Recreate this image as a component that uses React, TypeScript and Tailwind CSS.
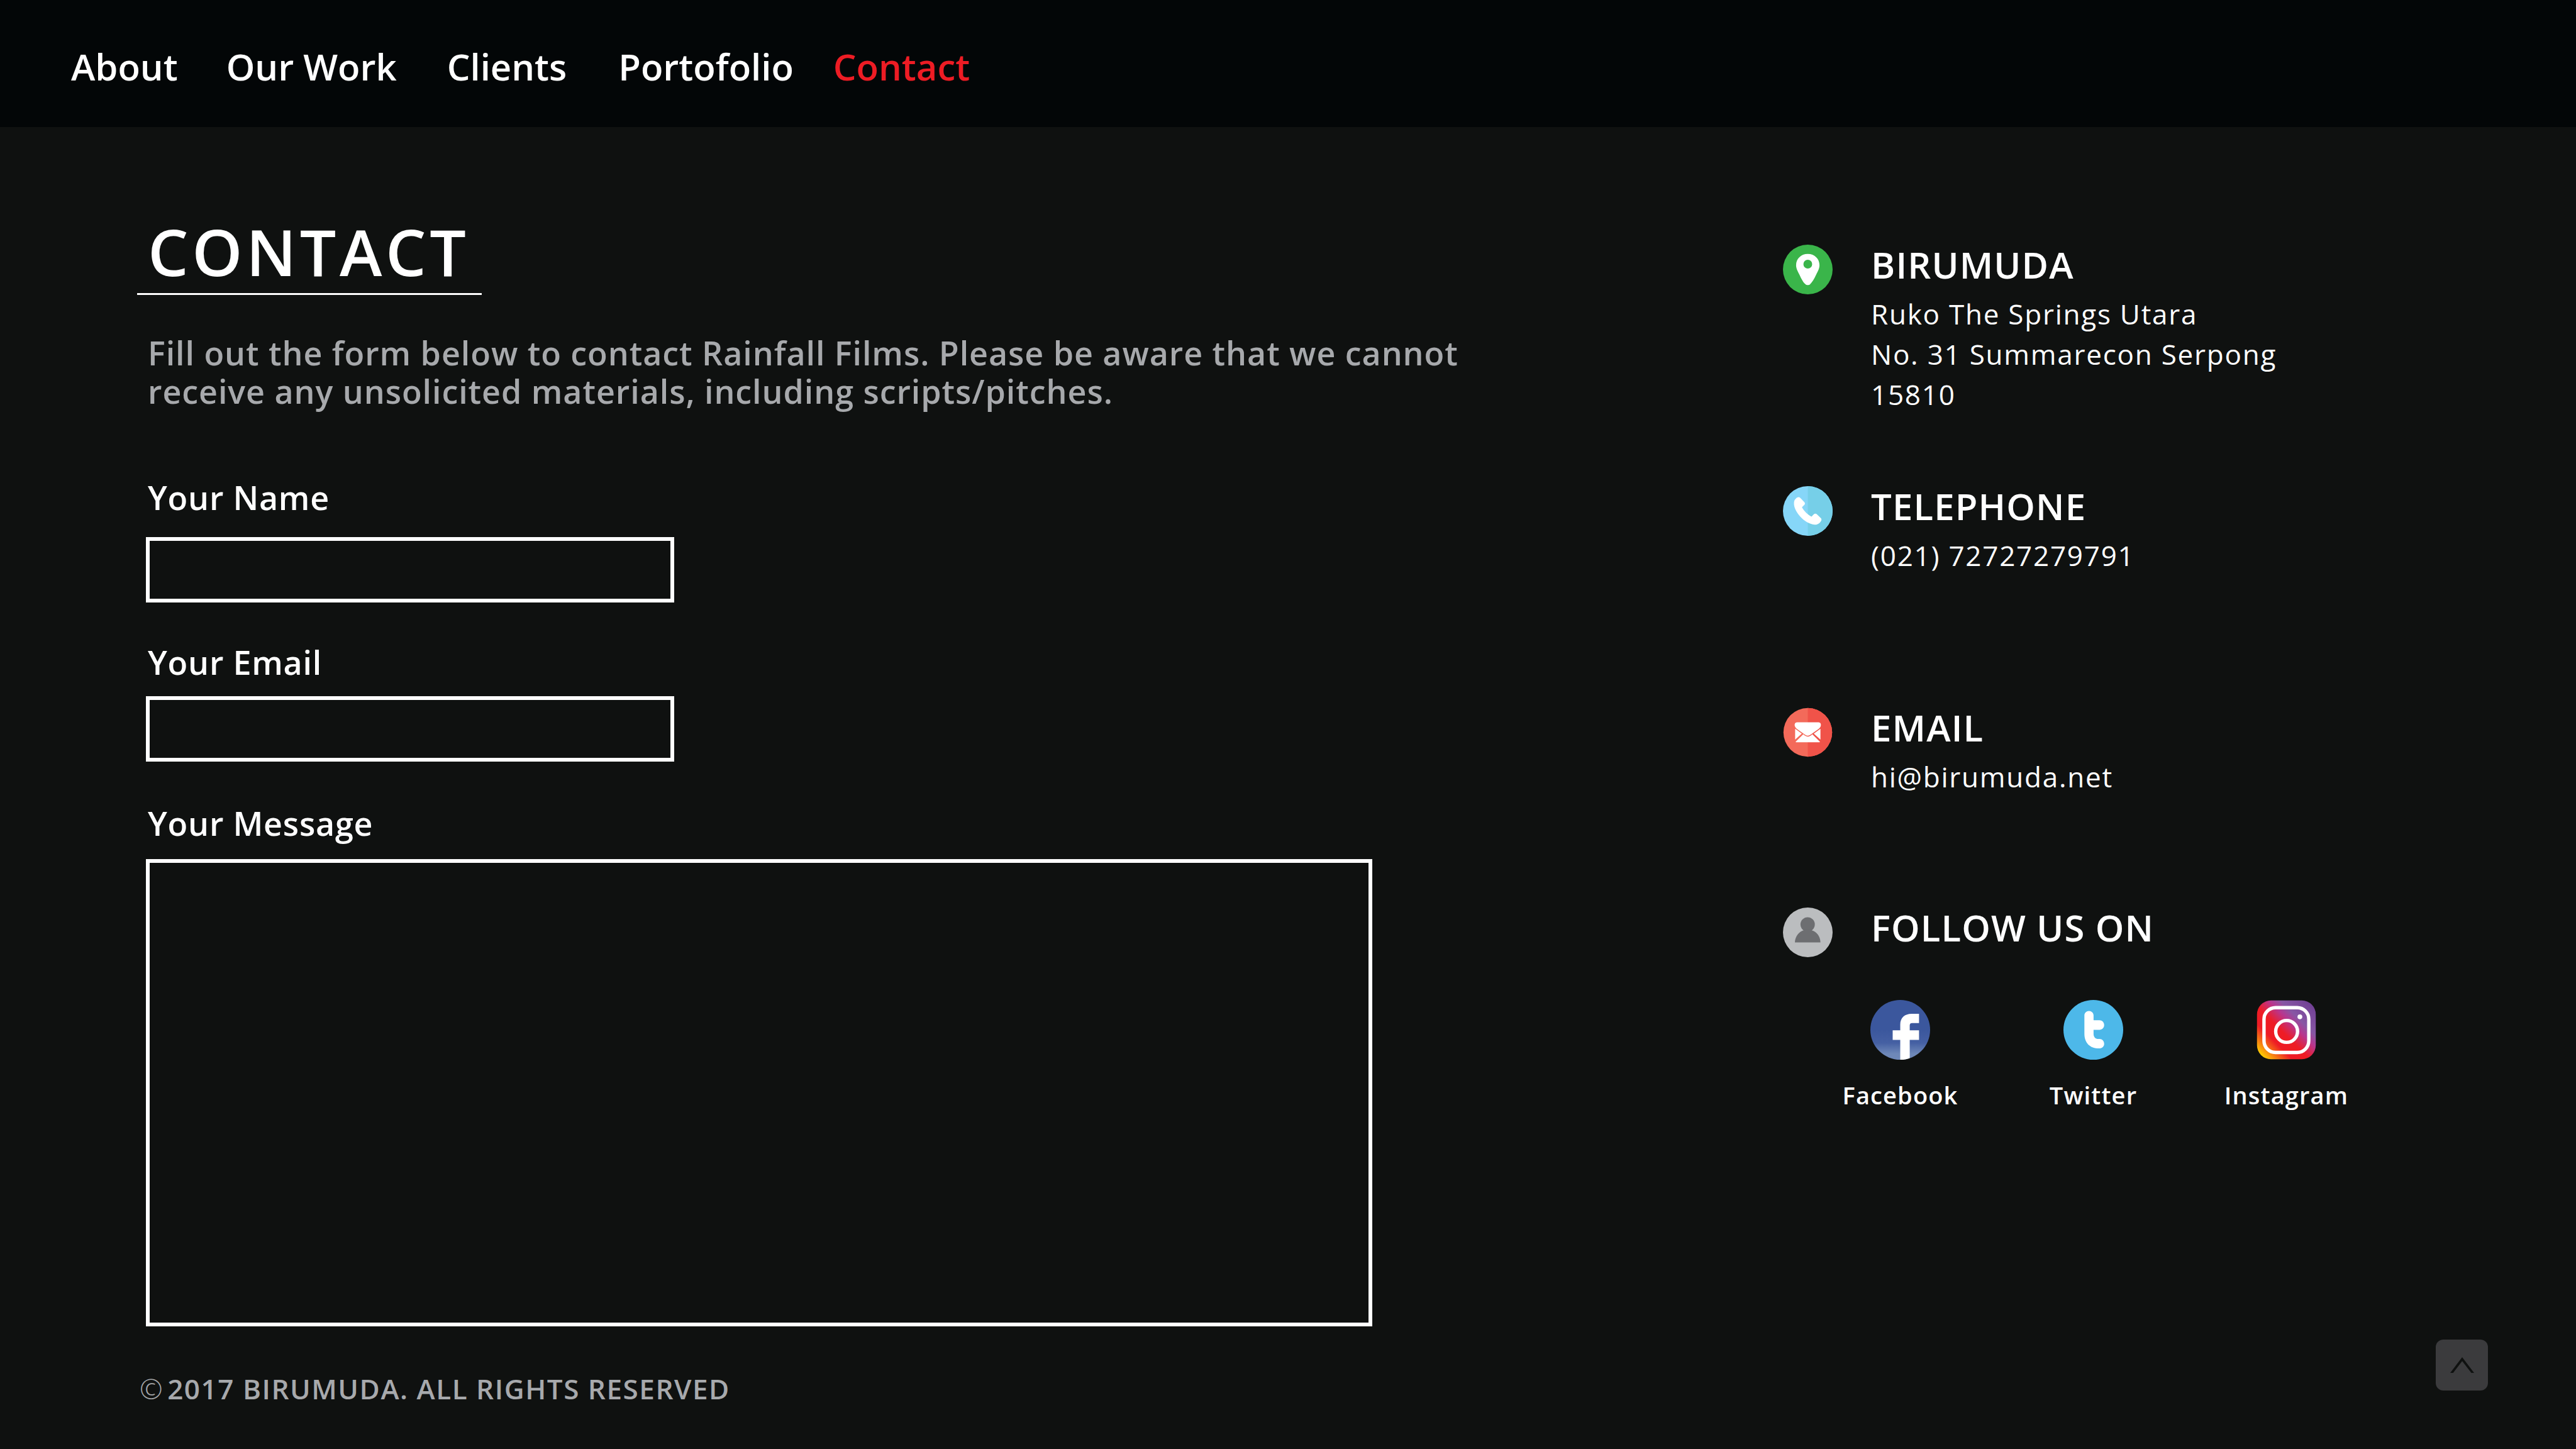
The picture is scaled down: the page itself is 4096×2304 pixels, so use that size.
import React from "react";

const links = [
  { label: "About", cls: "" },
  { label: "Our Work", cls: "ml-[77px]" },
  { label: "Clients", cls: "ml-[80px]" },
  { label: "Portofolio", cls: "ml-[82px]" },
  { label: "Contact", cls: "ml-[63px] text-[#ed1c24]" },
];

function PinIcon() {
  return (
    <svg viewBox="0 0 102 102" className="size-[79px] shrink-0" aria-hidden="true">
      <circle cx="51" cy="51" r="51" fill="#3ab54a" />
      <path
        fillRule="evenodd"
        fill="#fff"
        d="M51 19C37 19 27 29 27 42c0 7 3 12 7 20 4 9 8 16 12 19 2 2 3 2 5 2s3 0 5-2c4-4 8-10 12-19 4-8 7-13 7-20 0-13-10-23-24-23Zm0 12a9 9 0 1 0 0 18a9 9 0 1 0 0-18Z"
      />
    </svg>
  );
}

function PhoneIcon() {
  return (
    <svg viewBox="0 0 102 102" className="size-[79px] shrink-0" aria-hidden="true">
      <circle cx="51" cy="51" r="51" fill="#86d6f8" />
      <path d="M51 0a51 51 0 0 1 0 102Z" fill="#76cfe8" />
      <path
        fill="#fff"
        d="M26 26c3-3.500 7-4.500 10-1.500l8 8.500c1.500 1.500 1.500 4 0 5.500L39 43.300C43 51 51 59 58.700 62.700L63 58c2-2 5-2 7 0l8 8c1.500 1.500 1.500 4 0 6C74 78 70 79.300 65 79C54 78 43 71 35 62C27 53 22 43 22.700 34c0-3 1-6 3.300-8Z"
      />
    </svg>
  );
}

function MailIcon() {
  return (
    <svg viewBox="0 0 102 102" className="size-[79px] shrink-0" aria-hidden="true">
      <circle cx="51" cy="51" r="50" fill="#f36a5a" />
      <path d="M51 1a50 50 0 0 1 0 100Z" fill="#f05349" />
      <path
        fill="#fff"
        d="M29 30.300H73c5 0 5.500 5 4.500 8-1 3-3 4.500-5.500 6.500L57 55.500c-4 3-8 3-12 0L30 44.800c-2.500-2-4.500-3.500-5.500-6.500s-.5-8 4.500-8ZM25 43.700l13.700 10L25 66ZM77 43.700V66L63.300 53.700ZM41.700 55c7 6.500 11.600 6.500 18.600 0L76 70.300c0 .7-.5 1-1.200 1H27.200c-.7 0-1.200-.3-1.200-1Z"
      />
    </svg>
  );
}

function UserIcon() {
  return (
    <svg viewBox="0 0 102 102" className="size-[79px] shrink-0" aria-hidden="true">
      <circle cx="51" cy="51" r="51" fill="#bbbdbf" />
      <circle cx="50.700" cy="34.700" r="14.700" fill="#6d6e71" />
      <path fill="#6d6e71" d="M24.500 71.700C25 59 33 49.500 42.500 46.700L41 45h19.500L59 46.700C69 49.500 77 59 77 71.700Z" />
    </svg>
  );
}

function FacebookIcon() {
  return (
    <svg viewBox="0 0 124 124" className="size-[95px]" aria-hidden="true">
      <defs>
        <linearGradient id="fb" x1="0" y1="0" x2="0" y2="1">
          <stop offset="0.5" stopColor="#3b579d" />
          <stop offset="0.72" stopColor="#4560a3" />
          <stop offset="0.9" stopColor="#6e88b8" />
        </linearGradient>
        <clipPath id="fbc">
          <circle cx="62" cy="62" r="62" />
        </clipPath>
      </defs>
      <circle cx="62" cy="62" r="62" fill="url(#fb)" />
      <path
        clipPath="url(#fbc)"
        fill="#fff"
        d="M62 124V83H46.300V63H62V51c0-14 9-22.300 24-22.300h15V48H86.500c-3.500 0-4.800 2-4.800 5.300V63H101v20H81.700v41Z"
      />
    </svg>
  );
}

function TwitterIcon() {
  return (
    <svg viewBox="0 0 124 124" className="size-[95px]" aria-hidden="true">
      <circle cx="62" cy="62" r="62" fill="#4db8e9" />
      <path
        fill="#fff"
        d="M53 23c5 0 9.500 4 9.500 9v10H75c5 0 9.500 4 9.500 10s-4.500 10-9.500 10H62.500v8c0 7 4 11 10 11H75c5 0 9.500 4 9.500 10S80 100.500 74 100.500c-19 0-30.500-11.500-30.500-30.500V32c0-5 4.500-9 9.500-9Z"
      />
    </svg>
  );
}

function InstagramIcon() {
  return (
    <svg viewBox="0 0 124 124" className="size-[95px]" aria-hidden="true">
      <defs>
        <linearGradient id="ig" x1="0" y1="1" x2="1" y2="0">
          <stop offset="0.05" stopColor="#ffde00" />
          <stop offset="0.3" stopColor="#ee1c25" />
          <stop offset="0.45" stopColor="#ee1c25" />
          <stop offset="0.6" stopColor="#b8368f" />
          <stop offset="0.7" stopColor="#8757a4" />
          <stop offset="1" stopColor="#6b3a90" />
        </linearGradient>
      </defs>
      <rect x="1" y="1" width="122" height="122" rx="29" fill="url(#ig)" />
      <rect x="15.500" y="16" width="93" height="93" rx="24" fill="none" stroke="#fff" strokeWidth="7" />
      <circle cx="62.500" cy="65.300" r="22.700" fill="none" stroke="#fff" strokeWidth="7" />
      <circle cx="90" cy="35" r="5" fill="#fff" />
    </svg>
  );
}

const socials = [
  { label: "Facebook", Icon: FacebookIcon },
  { label: "Twitter", Icon: TwitterIcon },
  { label: "Instagram", Icon: InstagramIcon },
];

const heading = "text-[58px] leading-[64px] font-semibold tracking-[0.02em]";
const detail = "mt-[14px] text-[44px] leading-[64px] font-normal tracking-[0.04em]";
const label = "pl-[3px] text-[52px] leading-[60px] font-semibold tracking-[0.015em]";
const field = "border-[6px] border-white bg-transparent px-6 text-[44px] outline-none";

export default function App() {
  return (
    <div className="flex min-h-screen flex-col bg-[#0f1110] font-['Open_Sans',sans-serif] text-white">
      <header className="flex h-[202px] items-center bg-[#030607] pt-[10px] pl-[113px]">
        <nav className="flex text-[58px] leading-[64px] font-semibold">
          {links.map((l) => (
            <a key={l.label} href="#" className={l.cls}>
              {l.label}
            </a>
          ))}
        </nav>
      </header>

      <main className="flex flex-1 justify-between">
        <section className="flex flex-col pt-[142px] pl-[218px]">
          <h1 className="self-start border-b-[3px] border-white pr-5 pb-[10px] pl-[17px] text-[102px] leading-[112px] font-semibold tracking-[0.055em]">
            CONTACT
          </h1>
          <p className="mt-[61px] ml-[17px] w-[2120px] text-[52px] leading-[61px] font-semibold tracking-[0.018em] text-[#a7a9ac]">
            Fill out the form below to contact Rainfall Films. Please be aware that we cannot receive any unsolicited materials, including scripts/pitches.
          </p>
          <form className="mt-[109px] ml-[14px] flex flex-1 flex-col items-start">
            <label htmlFor="name" className={label}>Your Name</label>
            <input id="name" type="text" className={`${field} mt-[33px] h-[104px] w-[840px]`} />
            <label htmlFor="email" className={`${label} mt-[65px]`}>Your Email</label>
            <input id="email" type="email" className={`${field} mt-6 h-[104px] w-[840px]`} />
            <label htmlFor="message" className={`${label} mt-[68px]`}>Your Message</label>
            <textarea id="message" className={`${field} mt-[27px] min-h-[400px] w-[1950px] flex-1 resize-none py-4`} />
          </form>
        </section>

        <aside className="w-[1261px] pt-[187px]">
          <div className="flex gap-[61px]">
            <PinIcon />
            <div>
              <h2 className={heading}>BIRUMUDA</h2>
              <address className={`${detail} not-italic`}>
                Ruko The Springs Utara
                <br />
                No. 31 Summarecon Serpong
                <br />
                15810
              </address>
            </div>
          </div>
          <div className="mt-[114px] flex gap-[61px]">
            <PhoneIcon />
            <div>
              <h2 className={heading}>TELEPHONE</h2>
              <p className={detail}>(021) 72727279791</p>
            </div>
          </div>
          <div className="mt-[210px] flex gap-[61px]">
            <MailIcon />
            <div>
              <h2 className={heading}>EMAIL</h2>
              <p className={detail}>hi@birumuda.net</p>
            </div>
          </div>
          <div className="mt-[176px] flex gap-[61px]">
            <UserIcon />
            <h2 className={heading}>FOLLOW US ON</h2>
          </div>
          <div className="mt-[68px] ml-[33px] grid w-[921px] grid-cols-3">
            {socials.map(({ label: name, Icon }) => (
              <a key={name} href="#" className="flex flex-col items-center gap-[30px] text-[38px] leading-[52px] font-semibold tracking-[0.03em]">
                <Icon />
                {name}
              </a>
            ))}
          </div>
        </aside>
      </main>

      <footer className="flex items-start justify-between pt-[21px] pr-[140px] pb-[66px] pl-[222px] text-[#a7a9ac]">
        <p className="mt-12 text-[44px] leading-[60px] font-semibold tracking-[0.035em]">
          <span className="mr-1.5 font-light">©</span>2017 BIRUMUDA. ALL RIGHTS RESERVED
        </p>
        <button type="button" aria-label="Back to top" className="flex h-[81px] w-[83px] items-center justify-center rounded-xl bg-[#3b3b3d]">
          <svg viewBox="0 0 147 96" className="h-[25px] w-[38px]" aria-hidden="true">
            <path d="M73.500 0 147 96h-17L73.500 24 18 96H0Z" fill="#0f1110" />
          </svg>
        </button>
      </footer>
    </div>
  );
}
